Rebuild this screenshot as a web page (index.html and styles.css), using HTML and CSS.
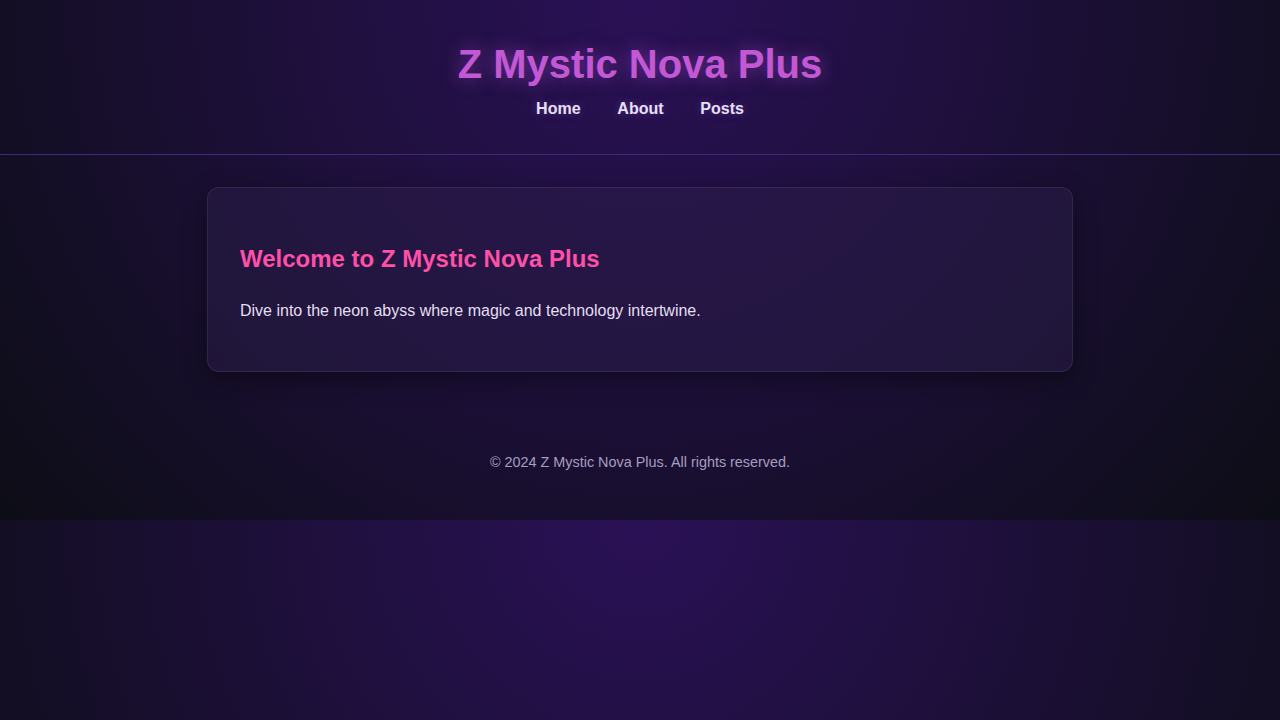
FILE: index.html
```html
<!DOCTYPE html>
<html lang="en">
<head>
  <meta charset="UTF-8" />
  <meta name="viewport" content="width=device-width, initial-scale=1.0"/>
  <title>Z Mystic Nova Plus</title>
  <link rel="stylesheet" href="styles.css">
</head>
<body>

  <header>
    <h1>Z Mystic Nova Plus</h1>
    <nav>
      <a href="#">Home</a>
      <a href="#">About</a>
      <a href="#">Posts</a>
    </nav>
  </header>

  <main>
    <section class="card">
      <h2>Welcome to Z Mystic Nova Plus</h2>
      <p>Dive into the neon abyss where magic and technology intertwine.</p>
    </section>
  </main>

  <footer>
    &copy; 2024 Z Mystic Nova Plus. All rights reserved.
  </footer>

</body>
</html>
```

FILE: styles.css
```css
body {
  margin: 0;
  font-family: "Liberation Sans", Arial, sans-serif;
  line-height: 1.6;
  color: #e4dff2;
  background: radial-gradient(circle at top, #2a1156 0%, #1a0f33 55%, #0d0d16 100%);
}

header {
  padding: 2rem;
  text-align: center;
  border-bottom: 1px solid #45287e;
}

header h1 {
  margin: 0;
  font-size: 2.5rem;
  color: #c258d6;
  text-shadow: 0 0 18px rgba(190, 85, 220, 0.5);
}

nav {
  display: flex;
  justify-content: center;
  gap: 2.3rem;
}

nav a {
  color: #e6e1f5;
  text-decoration: none;
  font-weight: bold;
  text-shadow: 0 0 8px rgba(170, 90, 230, 0.35);
}

nav a:hover {
  color: #ff4fa8;
}

main {
  padding: 2rem;
}

.card {
  max-width: 800px;
  margin: 0 auto;
  padding: 2rem;
  background: rgba(45, 30, 75, 0.45);
  border: 1px solid rgba(255, 255, 255, 0.08);
  border-radius: 12px;
  box-shadow: 0 8px 24px rgba(0, 0, 0, 0.4);
}

.card h2 {
  color: #ff4fa8;
  font-size: 1.5rem;
  margin: 20px 0;
}

.card p {
  margin: 0 0 15px;
}

footer {
  padding: 47.5px 1rem 45.5px;
  text-align: center;
  font-size: 0.9rem;
  color: #a69ec0;
}
```
